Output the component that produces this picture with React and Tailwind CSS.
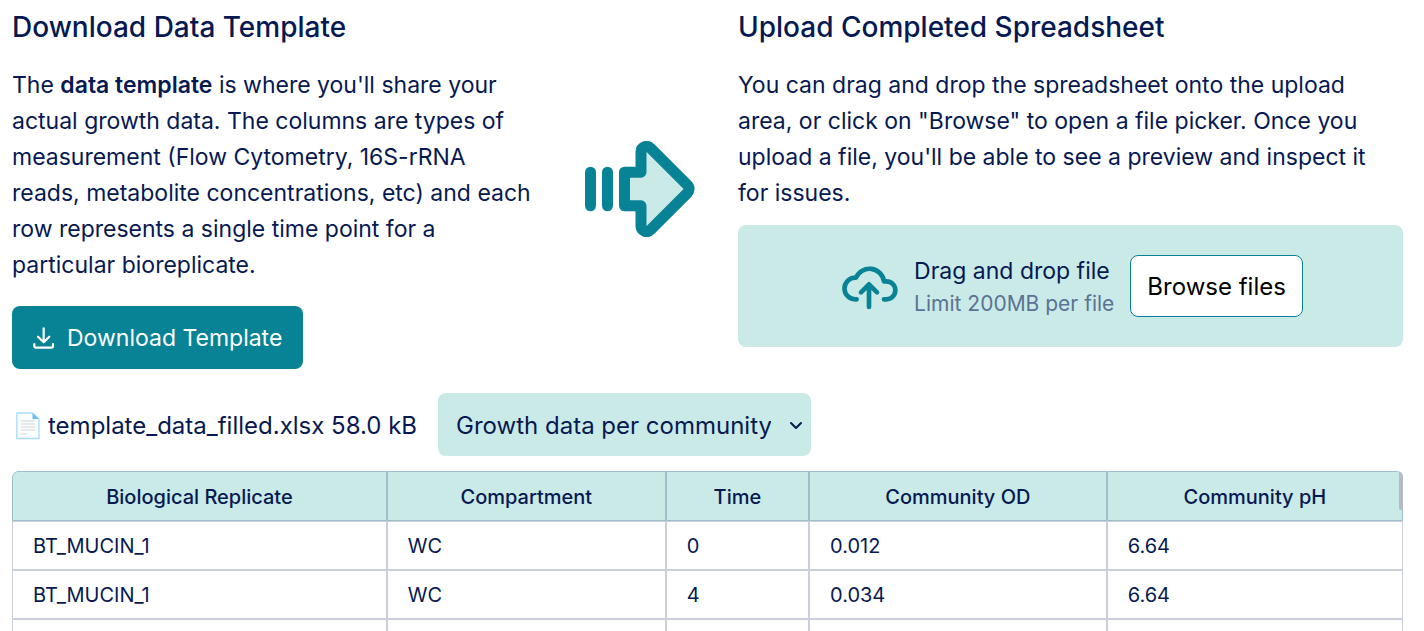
const columns = [
  { name: 'Biological Replicate', width: 'w-[26.95%]' },
  { name: 'Compartment', width: 'w-[20.05%]' },
  { name: 'Time', width: 'w-[10.3%]' },
  { name: 'Community OD', width: 'w-[21.4%]' },
  { name: 'Community pH', width: 'w-[21.3%]' },
];

const rows = [
  ['BT_MUCIN_1', 'WC', '0', '0.012', '6.64'],
  ['BT_MUCIN_1', 'WC', '4', '0.034', '6.64'],
  ['', '', '', '', ''],
];

function ArrowIcon() {
  return (
    <svg viewBox="45 60 330 288" className="h-24 w-[110px]" aria-hidden="true">
      <rect x="45" y="137" width="33" height="134" rx="16.5" fill="#088395" />
      <rect x="96" y="137" width="33" height="134" rx="16.5" fill="#088395" />
      <path
        d="M163.5 153.5H213V93A16.5 16.5 0 0 1 241.5 81.5L352.5 192.5A16.5 16.5 0 0 1 352.5 215.5L241.5 326.5A16.5 16.5 0 0 1 213 315V254.5H163.5Z"
        fill="#caeae8"
        stroke="#088395"
        strokeWidth="33"
        strokeLinejoin="round"
      />
    </svg>
  );
}

function CloudIcon() {
  return (
    <svg
      viewBox="36 131 168 144"
      className="h-12 w-14 shrink-0"
      fill="none"
      stroke="#088395"
      strokeWidth="14"
      strokeLinecap="round"
      strokeLinejoin="round"
      aria-hidden="true"
    >
      <path d="M80 243H76A32.5 32.5 0 0 1 76 178H78A44 44 0 0 1 162 189H169A27 27 0 0 1 169 243H162" />
      <path d="M117 200V266M93 222L117 198L141 222" />
    </svg>
  );
}

function DownloadIcon() {
  return (
    <svg
      viewBox="98 96 66 66"
      className="size-[22px] shrink-0"
      fill="none"
      stroke="currentColor"
      strokeWidth="6.5"
      strokeLinecap="round"
      strokeLinejoin="round"
      aria-hidden="true"
    >
      <path d="M130 100V140M113 125L130 142L147 125" />
      <path d="M102 147V153Q102 158 107 158H153Q158 158 158 153V147" />
    </svg>
  );
}

function FileIcon() {
  return (
    <svg viewBox="0 0 24 28" className="h-7 w-6 shrink-0" aria-hidden="true">
      <path d="M.8 1H16.5L23 7V26.5H.8Z" fill="#fbfdfe" stroke="#a9dbfb" strokeWidth="1.3" />
      <path d="M16.5 1L23 7H16.5Z" fill="#6cbdf2" />
      <path
        d="M5 9H19M5 12H19M5 15H19M5 18H19M5 22H11"
        stroke="#ccd6da"
        strokeWidth="1.2"
      />
    </svg>
  );
}

export default function App() {
  return (
    <div className="flex h-screen flex-col overflow-hidden bg-white pt-2 pr-[21px] pl-3 font-[Inter,sans-serif] text-2xl/9 text-[#071952]">
      <div className="grid grid-cols-[minmax(0,530fr)_196px_minmax(0,665fr)]">
        <section>
          <h2 className="text-[28px]/[38px] font-medium">Download Data Template</h2>
          <p className="mt-[21px] pr-2 text-[23px]/9">
            The <strong className="font-semibold">data template</strong> is where you'll share your
            actual growth data. The columns are types of measurement (Flow Cytometry, 16S-rRNA
            reads, metabolite concentrations, etc) and each row represents a single time point for a
            particular bioreplicate.
          </p>
          <button
            type="button"
            className="mt-[23px] flex h-[63px] items-center gap-3 rounded-lg bg-[#088395] px-[21px] text-[23px]/9 text-white"
          >
            <DownloadIcon />
            Download Template
          </button>
        </section>
        <div className="flex items-center justify-center">
          <ArrowIcon />
        </div>
        <section>
          <h2 className="text-[28px]/[38px] font-medium">Upload Completed Spreadsheet</h2>
          <p className="mt-[21px] pr-5 text-[23px]/9">
            You can drag and drop the spreadsheet onto the upload area, or click on "Browse" to open
            a file picker. Once you upload a file, you'll be able to see a preview and inspect it for
            issues.
          </p>
          <div className="mt-3.5 flex h-[122px] items-center justify-center gap-4 rounded-lg bg-[#caeae8] pl-1">
            <CloudIcon />
            <div>
              <div className="text-[23px]/9">Drag and drop file</div>
              <div className="text-[21px]/[30px] text-[#5a7394]">Limit 200MB per file</div>
            </div>
            <button
              type="button"
              className="h-[62px] rounded-lg border border-[#088395] bg-white px-4 pt-0.5 text-black"
            >
              Browse files
            </button>
          </div>
        </section>
      </div>

      <div className="mt-6 flex items-center gap-[21px]">
        <div className="flex items-center gap-2 pt-0.5 pl-1">
          <FileIcon />
          <span>template_data_filled.xlsx 58.0 kB</span>
        </div>
        <div className="relative">
          <select
            aria-label="Worksheet"
            className="h-[63px] w-[373px] appearance-none rounded-lg bg-[#caeae8] pt-0.5 pr-10 pl-[18px]"
          >
            <option>Growth data per community</option>
          </select>
          <svg
            viewBox="0 0 14 9"
            className="pointer-events-none absolute top-7 right-2 h-[9px] w-3.5"
            fill="none"
            stroke="currentColor"
            strokeWidth="2"
            strokeLinecap="round"
            strokeLinejoin="round"
            aria-hidden="true"
          >
            <path d="M2 2L7 7L12 2" />
          </svg>
        </div>
      </div>

      <div className="relative mt-[15px] min-h-0 flex-1 overflow-hidden rounded-t-md">
        <table className="w-full table-fixed border-separate border-spacing-0 text-xl/[30px]">
          <thead>
            <tr className="h-[50px]">
              {columns.map((column) => (
                <th
                  key={column.name}
                  className={`${column.width} border border-[#9dbecb] bg-[#caeae8] pt-0.5 font-medium first:rounded-tl-md last:rounded-tr-md`}
                >
                  {column.name}
                </th>
              ))}
            </tr>
          </thead>
          <tbody>
            {rows.map((row, i) => (
              <tr key={i} className="h-[49px]">
                {row.map((cell, j) => (
                  <td key={j} className="border border-[#cbcfdc] px-5">
                    {cell}
                  </td>
                ))}
              </tr>
            ))}
          </tbody>
        </table>
        <div className="absolute top-0 right-0 h-[39px] w-1 rounded-b-xs bg-[#b5bbc0]" />
      </div>
    </div>
  );
}
